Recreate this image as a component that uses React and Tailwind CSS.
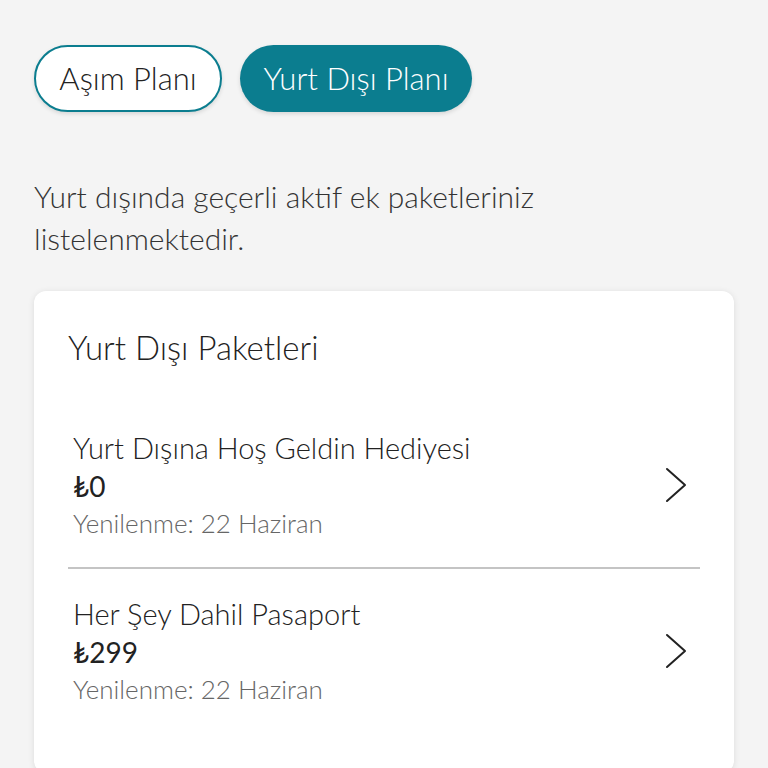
import React from 'react';

const PACKAGES = [
  { name: 'Yurt Dışına Hoş Geldin Hediyesi', price: '₺0', renew: 'Yenilenme: 22 Haziran' },
  { name: 'Her Şey Dahil Pasaport', price: '₺299', renew: 'Yenilenme: 22 Haziran' },
];

function Chevron() {
  return (
    <svg width="24" height="36" viewBox="0 0 24 36" fill="none" stroke="#222" strokeWidth="2" strokeLinecap="round" strokeLinejoin="round">
      <path d="M3 2 L21 18 L3 34" />
    </svg>
  );
}

export default function App() {
  return (
    <div className="min-h-screen bg-[#f4f4f4] px-[34px] pt-[45px] font-['Lato','Noto_Sans',sans-serif] text-[#333]">
      {/* Plan tabs */}
      <div className="flex gap-[18px]">
        <button className="h-[67px] w-[188px] rounded-full border-2 border-[#0b7d8f] bg-white text-[31px] font-light text-[#222] shadow-[0_2px_4px_rgba(0,0,0,0.12)]">
          Aşım Planı
        </button>
        <button className="h-[67px] w-[232px] rounded-full bg-[#0b7d8f] text-[31px] font-light text-white shadow-[0_2px_4px_rgba(0,0,0,0.12)]">
          Yurt Dışı Planı
        </button>
      </div>

      <p className="mt-[63px] text-[30px] font-light leading-[42px] text-[#333] max-w-[540px]">
        Yurt dışında geçerli aktif ek paketleriniz listelenmektedir.
      </p>

      {/* Packages card */}
      <div className="mt-[32px] rounded-[12px] bg-white px-[34px] pt-[32px] pb-[40px] shadow-[0_1px_6px_rgba(0,0,0,0.1)]">
        <h2 className="text-[33px] font-light leading-[48px] text-[#222]">Yurt Dışı Paketleri</h2>
        <div className="mt-[58px]">
          {PACKAGES.map((p, i) => (
            <div key={p.name}>
              {i > 0 && <div className="h-[2px] bg-[#c4c4c4]" />}
              <div className={`flex items-center justify-between pl-[5px] pr-[12px] ${i > 0 ? 'pt-[26px]' : ''} pb-[26px]`}>
                <div className="flex flex-col">
                  <span className="text-[29px] font-light leading-[38px] text-[#222]">{p.name}</span>
                  <span className="text-[28px] font-normal leading-[38px] text-[#222]">{p.price}</span>
                  <span className="text-[26px] font-light leading-[36px] text-[#666]">{p.renew}</span>
                </div>
                <Chevron />
              </div>
            </div>
          ))}
        </div>
      </div>
    </div>
  );
}
